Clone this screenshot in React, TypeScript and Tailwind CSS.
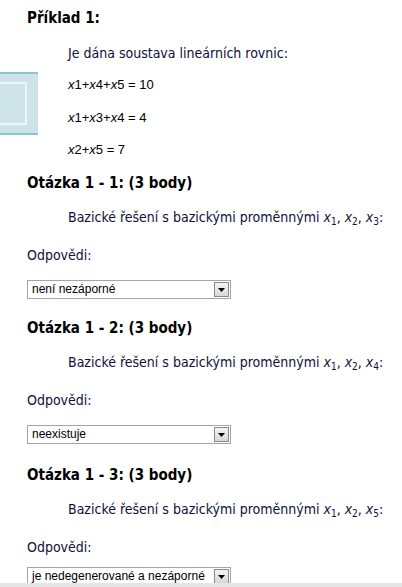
import React from 'react'

const body = "font-['DejaVu_Sans_Condensed','DejaVu_Sans',sans-serif] text-[14px] text-[#10103a]"
const heading = "font-['DejaVu_Sans_Condensed','DejaVu_Sans',sans-serif] font-bold text-[15px] text-black leading-[20px]"

function Select({ value }: { value: string }) {
  return (
    <div className="flex h-[19px] w-[204px] items-stretch border border-[#a5a5a5] bg-white">
      <span className="flex-1 overflow-hidden whitespace-nowrap pl-[4px] font-['Liberation_Sans',sans-serif] text-[12px] leading-[17px] text-black">
        {value}
      </span>
      <span className="m-[1px] flex w-[15px] items-center justify-center border border-[#8a8a8a] bg-gradient-to-b from-[#f4f4f4] to-[#d8d8d8]">
        <svg width="7" height="4" viewBox="0 0 7 4">
          <path d="M0 0h7L3.5 4z" fill="#000" />
        </svg>
      </span>
    </div>
  )
}

function Sub({ n }: { n: number }) {
  return (
    <>
      <i>x</i>
      <sub className="text-[10px]">{n}</sub>
    </>
  )
}

function Question({ idx, vars, answer, gap = 15 }: { idx: number; vars: number[]; answer: string; gap?: number }) {
  return (
    <div className="pt-[13px]">
      <div className={heading}>Otázka 1 - {idx}: (3 body)</div>
      <div className={`${body} mt-[14px] pl-[41px] leading-[20px]`}>
        Bazické řešení s bazickými proměnnými <Sub n={vars[0]} />, <Sub n={vars[1]} />, <Sub n={vars[2]} />:
      </div>
      <div className={`${body} mt-[18px] leading-[20px]`}>Odpovědi:</div>
      <div className={gap === 15 ? 'mt-[15px]' : 'mt-[10px]'}>
        <Select value={answer} />
      </div>
    </div>
  )
}

export default function App() {
  const eq = "font-['Liberation_Sans',sans-serif] text-[13px] text-black leading-[20px] pl-[41px]"
  return (
    <div className="relative h-[587px] w-[402px] overflow-hidden bg-white">
      <div className="absolute left-0 top-[72px] h-[63px] w-[38px] border-y-2 border-[#8cc4cf] bg-[#cde3e8]">
        <div className="mt-[8px] h-[43px] w-[27px] border-y-2 border-r-2 border-[#eef5f6]" />
      </div>

      <div className="pl-[27px] pt-[8px]">
        <div className={heading}>Příklad 1:</div>
        <div className={`${body} mt-[15px] pl-[41px] leading-[20px]`}>Je dána soustava lineárních rovnic:</div>
        <div className={`${eq} mt-[12px]`}>
          <i>x</i>1+<i>x</i>4+<i>x</i>5 = 10
        </div>
        <div className={`${eq} mt-[13px]`}>
          <i>x</i>1+<i>x</i>3+<i>x</i>4 = 4
        </div>
        <div className={`${eq} mt-[12px]`}>
          <i>x</i>2+<i>x</i>5 = 7
        </div>

        <Question idx={1} vars={[1, 2, 3]} answer="není nezáporné" />
        <div className="mt-[6px]">
          <Question idx={2} vars={[1, 2, 4]} answer="neexistuje" />
        </div>
        <div className="mt-[8px]">
          <Question idx={3} vars={[1, 2, 5]} answer="je nedegenerované a nezáporné" gap={10} />
        </div>
      </div>

      <div className="absolute bottom-0 left-0 h-[4px] w-full bg-[#e6e6e6]" />
    </div>
  )
}
